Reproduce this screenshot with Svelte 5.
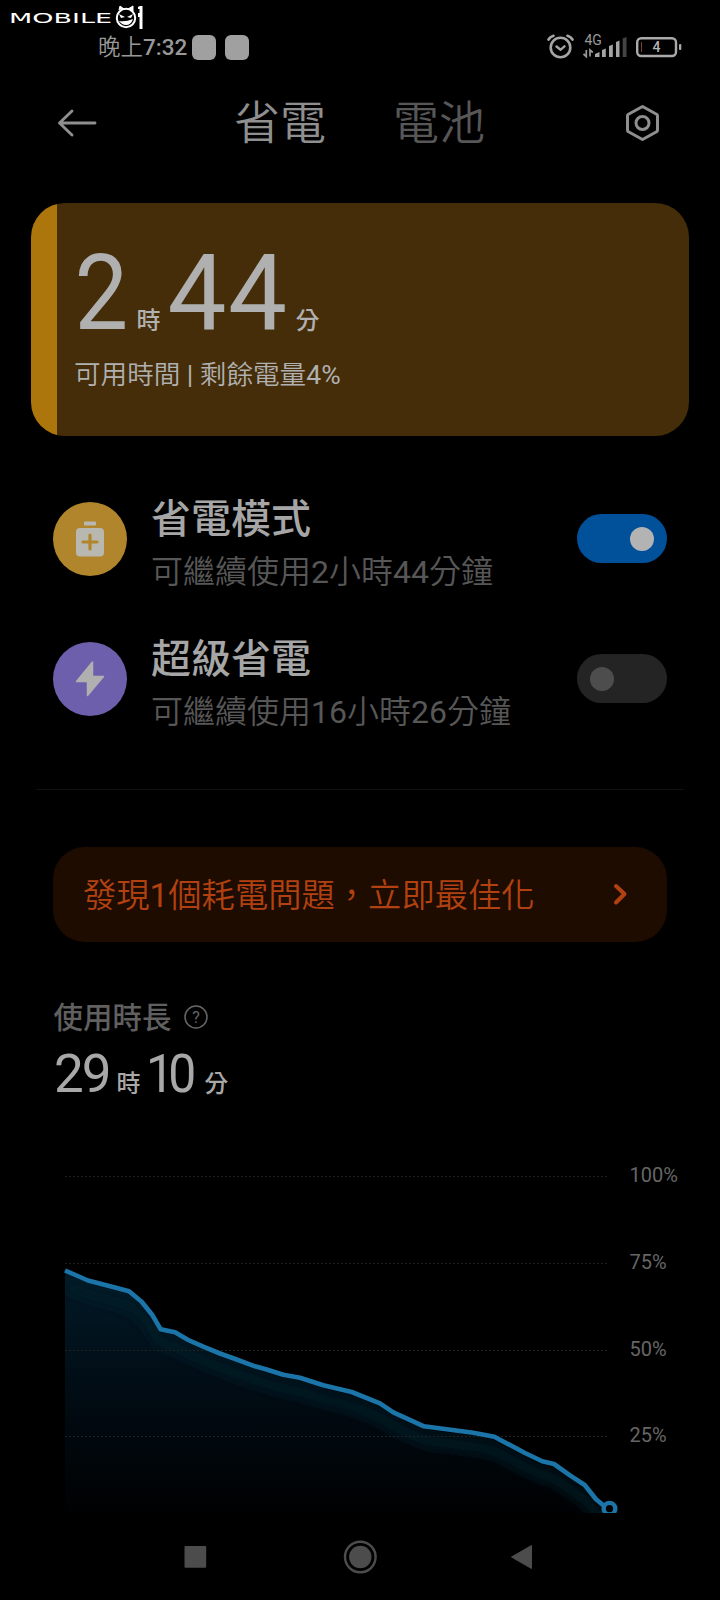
<script lang="ts">
  type Point = [number, number];

  const modes = [
    { id: "saver", title: "省電模式", detail: "可繼續使用2小時44分鐘", on: true },
    { id: "ultra", title: "超級省電", detail: "可繼續使用16小時26分鐘", on: false },
  ];

  const levels = [
    { label: "100%", y: 26.5 },
    { label: "75%", y: 113.5 },
    { label: "50%", y: 200.5 },
    { label: "25%", y: 286.5 },
  ];

  // battery level over time, in chart pixels
  const points: Point[] = [
    [65, 120.5], [88, 130.5], [115, 137.5], [129, 141.3], [141.7, 151.7],
    [152.3, 165], [160.7, 179.3], [175, 182.3], [188.3, 190], [203.3, 196.7],
    [220, 203.5], [236.7, 209.5], [255, 216.3], [266.7, 219.5], [283.3, 224.7],
    [300, 227.7], [323.3, 235.3], [351.7, 242], [380, 253.3], [393.3, 262.3],
    [424, 276.3], [473.3, 282.7], [494.3, 286.7], [525, 303], [542.3, 311.3],
    [554, 314], [570, 325.3], [584.7, 335], [596, 349.3], [603, 355],
    [609.5, 358.7],
  ];
  const chartHeight = 363;

  const line = points.map(([x, y]) => `${x},${y}`).join(" ");
  const area = `65,${chartHeight} ${line} 609.5,${chartHeight}`;
  const [endX, endY] = points[points.length - 1];

  // odd entries are the numbers, which take a heavier weight
  const splitNumbers = (text: string) => text.split(/(\d+)/);
</script>

<div class="screen">
  <svg class="watermark" width="150" height="34" viewBox="0 0 150 34">
    <text class="brand" x="9" y="23" textLength="103" lengthAdjust="spacingAndGlyphs">MOBILE</text>
    <circle cx="126" cy="18" r="9.2" fill="none" stroke="#fff" stroke-width="2" />
    <path d="M119 10L120 6L124 9M128 9L133 6L133 11" fill="#fff" stroke="#fff" />
    <path d="M119 14L125 17L121 18ZM133 14L127 17L131 18ZM119 21Q126 22 133 19Q131 25 126 25Q122 25 119 21Z" fill="#fff" />
    <path d="M138 7L140 6H142.500V29H139.500V17H138V13H139.500V9H138Z" fill="#fff" />
  </svg>

  <div class="status">
    <span class="clock">晚上<b>7:32</b></span>
    <i class="chip"></i>
    <i class="chip"></i>
    <svg class="signals" width="140" height="30" viewBox="0 0 140 30">
      <g fill="none" stroke="#a5a5a5" stroke-linecap="round">
        <circle cx="15.500" cy="15.500" r="9.800" stroke-width="2.600" />
        <path d="M11.500 14.500L15.500 17.800L19.500 14.300" stroke-width="2.400" />
        <path d="M3.500 7.500Q5 5 8.500 3.800M22.500 3.800Q26 5 27.500 7.500" stroke-width="2.700" />
      </g>
      <text class="net" x="39.500" y="13.300">4G</text>
      <path d="M41.300 18V24.500L38.500 22M45 24.500V18L47.800 20.500" fill="none" stroke="#999" stroke-width="1.700" />
      <g fill="#a5a5a5">
        <path d="M50 25V22L54.500 20V25Z" />
        <path d="M57 25V18L60.800 16.500V25Z" />
        <path d="M64 25V14L67.800 12.500V25Z" />
        <path d="M71 25V10L74.500 8.500V25Z" />
      </g>
      <path d="M77.700 25V6.500L81.500 5V25Z" fill="#444" />
      <rect x="92.200" y="6.200" width="38.800" height="17.800" rx="4" fill="none" stroke="#aaa" stroke-width="2.400" />
      <rect x="134" y="12" width="2.300" height="6" rx="1" fill="#aaa" />
      <rect x="96" y="10" width="1" height="10" fill="#74452c" />
      <text class="charge" x="107.500" y="20.300">4</text>
    </svg>
  </div>

  <header>
    <svg width="40" height="40" viewBox="0 0 40 40">
      <path d="M38 20H3M15 8L2.500 20L15 32" fill="none" stroke="#8f8f8f" stroke-width="2.900" stroke-linecap="round" stroke-linejoin="round" />
    </svg>
    <nav>
      <span class="tab active">省電</span>
      <span class="tab">電池</span>
    </nav>
    <svg width="40" height="40" viewBox="0 0 40 40">
      <g fill="none" stroke="#8f8f8f" stroke-width="3">
        <path d="M20.500 3.500L35 11.500Q35.500 12 35.500 13V27Q35.500 28 35 28.500L20.500 36.500L6 28.500Q5.500 28 5.500 27V13Q5.500 12 6 11.500Z" stroke-linejoin="round" />
        <circle cx="20.500" cy="20" r="6.500" />
      </g>
    </svg>
  </header>

  <section class="remaining">
    <div class="time">
      <b class="hours">2</b><span>時</span><b class="minutes">44</b><span>分</span>
    </div>
    <p>可用時間 <b>|</b> 剩餘電量<b>4%</b></p>
  </section>

  <section class="modes">
    {#each modes as mode (mode.id)}
      <div class="mode">
        <div class="icon {mode.id}">
          <svg width="74" height="74" viewBox="0 0 74 74">
            {#if mode.id === "saver"}
              <rect x="31" y="19.500" width="12" height="4" rx="1" fill="#b8b8b0" />
              <rect x="23" y="26" width="28" height="28.500" rx="4" fill="#b8b8b0" />
              <path d="M37 33V47M30 40H44" stroke="#b0852b" stroke-width="3.200" stroke-linecap="round" />
            {:else}
              <path d="M39.500 20L23.500 39.500H34.500V53.500L50.500 34.500H39.500Z" fill="#b0b0b0" stroke="#b0b0b0" stroke-width="1.500" stroke-linejoin="round" />
            {/if}
          </svg>
        </div>
        <div class="text">
          <h2>{mode.title}</h2>
          <p>{#each splitNumbers(mode.detail) as part, i}{#if i % 2}<b>{part}</b>{:else}{part}{/if}{/each}</p>
        </div>
        <div class="switch" class:on={mode.on}><i></i></div>
      </div>
    {/each}
  </section>

  <hr />

  <div class="alert">
    <span>發現<b>1</b>個耗電問題，立即最佳化</span>
    <svg width="20" height="28" viewBox="0 0 20 28">
      <path d="M5 5L13.500 13L5 21.500" fill="none" stroke="#b14110" stroke-width="4" stroke-linecap="round" stroke-linejoin="round" />
    </svg>
  </div>

  <section class="usage">
    <div class="label">
      <span>使用時長</span>
      <svg width="26" height="26" viewBox="0 0 26 26">
        <circle cx="13" cy="13" r="11" fill="none" stroke="#666" stroke-width="1.500" />
        <text class="help" x="13" y="18.500" text-anchor="middle">?</text>
      </svg>
    </div>
    <div class="total">
      <b>29</b><span>時</span><b class="minutes">10</b><span>分</span>
    </div>
  </section>

  <svg class="chart" width="720" height={chartHeight} viewBox="0 0 720 {chartHeight}">
    <defs>
      <linearGradient id="fill" gradientUnits="userSpaceOnUse" x1="0" y1="120" x2="0" y2={chartHeight}>
        <stop offset="0" stop-color="#021a28" />
        <stop offset="0.500" stop-color="#010c14" />
        <stop offset="1" stop-color="#000102" />
      </linearGradient>
      <clipPath id="under"><polygon points={area} /></clipPath>
      <filter id="soft" x="-10%" y="-10%" width="120%" height="130%">
        <feGaussianBlur stdDeviation="6" />
      </filter>
    </defs>
    <polygon points={area} fill="url(#fill)" />
    <g clip-path="url(#under)">
      <polyline class="glow" points={line} transform="translate(0 14)" filter="url(#soft)" />
    </g>
    {#each levels as level}
      <line class="grid" x1="65" x2="609" y1={level.y} y2={level.y} />
      <text class="level" x="629.500" y={level.y + 5.5}>{level.label}</text>
    {/each}
    <polyline class="curve" points={line} />
    <circle cx={endX} cy={endY} r="5.800" fill="#000" stroke="#1b75a8" stroke-width="4.400" />
  </svg>

  <footer>
    <svg width="720" height="40" viewBox="0 0 720 40" fill="#4c4c4c">
      <rect x="184.500" y="9" width="21.700" height="21.700" rx="1" />
      <circle cx="360.300" cy="20" r="11.200" />
      <circle cx="360.300" cy="20" r="15.300" fill="none" stroke="#4c4c4c" stroke-width="2.400" />
      <path d="M511.500 20L531.500 8.500V31.500Z" stroke="#4c4c4c" stroke-linejoin="round" />
    </svg>
  </footer>
</div>

<style>
  :global(body) {
    margin: 0;
    background: #000;
  }

  .screen {
    position: relative;
    display: flex;
    flex-direction: column;
    width: 720px;
    height: 1600px;
    overflow: hidden;
    background: #000;
    color: #a8a8a8;
    font-family: Roboto, "Noto Sans CJK TC", sans-serif;
  }

  svg {
    display: block;
    flex: none;
  }

  h2,
  p {
    margin: 0;
  }

  b {
    font-weight: 400;
  }

  .watermark {
    position: absolute;
    top: 0;
    left: 0;
  }
  .brand {
    fill: #fff;
    font: 400 14px "DejaVu Sans", sans-serif;
  }

  .status {
    display: flex;
    align-items: center;
    height: 94px;
    padding-left: 98px;
  }
  .clock {
    width: 94px;
    color: #999;
    font-size: 22.500px;
    font-weight: 350;
    line-height: 30px;
    white-space: nowrap;
  }
  .clock b {
    font-weight: 500;
  }
  .chip {
    width: 24px;
    height: 25px;
    margin-right: 9px;
    border-radius: 6px;
    background: #a0a0a0;
  }
  .signals {
    margin-left: 287px;
  }
  .net {
    fill: #999;
    font-size: 14px;
  }
  .charge {
    fill: #b5b5b5;
    font-size: 14px;
    font-weight: 500;
  }

  header {
    display: flex;
    align-items: center;
    justify-content: space-between;
    height: 58px;
    padding: 0 58px 0 57px;
  }
  nav {
    display: flex;
    gap: 67px;
  }
  .tab {
    color: #575757;
    font-size: 46px;
    font-weight: 350;
    line-height: 58px;
  }
  .tab.active {
    color: #8f8f8f;
  }

  .remaining {
    box-sizing: border-box;
    height: 233px;
    margin: 51px 31px 0;
    padding: 34px 0 0 43px;
    border-radius: 34px;
    background: linear-gradient(90deg, #ad760c 26px, #442d08 26px);
    color: #b0b0b0;
  }
  .time {
    display: flex;
    align-items: baseline;
    height: 118px;
    line-height: 114px;
  }
  .time b {
    font-size: 105px;
    font-weight: 430;
    letter-spacing: 1.500px;
  }
  .time .hours {
    margin-right: -6px;
    transform: scaleX(0.910);
    transform-origin: 6px 0;
  }
  .time span {
    margin-left: 8px;
    font-size: 24px;
    font-weight: 500;
  }
  .time .minutes {
    margin-left: 7px;
    margin-right: -1px;
  }
  .remaining p {
    font-size: 26.600px;
    font-weight: 350;
    line-height: 40px;
  }

  .modes {
    display: flex;
    flex-direction: column;
    gap: 40px;
    margin: 53px 53px 0;
  }
  .mode {
    display: flex;
    align-items: center;
    height: 100px;
  }
  .icon {
    border-radius: 50%;
    background: #b0852b;
  }
  .icon.ultra {
    background: #6d5fac;
  }
  .text {
    flex: 1;
    margin-left: 24px;
    padding-top: 12px;
  }
  .text h2 {
    color: #a6a6a6;
    font-size: 40px;
    font-weight: 500;
    line-height: 54px;
  }
  .text p {
    color: #575757;
    font-size: 32px;
    font-weight: 350;
    line-height: 50px;
  }
  .switch {
    box-sizing: border-box;
    display: flex;
    align-items: center;
    width: 90px;
    height: 49px;
    margin-bottom: 1px;
    padding: 0 13px;
    border-radius: 25px;
    background: #242424;
  }
  .switch i {
    width: 24px;
    height: 24px;
    border-radius: 50%;
    background: #4d4d4d;
  }
  .switch.on {
    justify-content: flex-end;
    background: #00509a;
  }
  .switch.on i {
    background: #b3b3b3;
  }

  hr {
    width: 648px;
    height: 1px;
    margin: 60px 36px 0;
    border: 0;
    background: #111;
  }

  .alert {
    display: flex;
    align-items: center;
    justify-content: space-between;
    height: 95px;
    margin: 57px 53px 0;
    padding: 0 36px 0 30px;
    border-radius: 32px;
    background: #1e0c01;
    color: #b14110;
    font-size: 33.300px;
    font-weight: 350;
  }
  .alert span {
    padding-bottom: 4px;
  }

  .usage {
    height: 208px;
    padding-left: 53px;
  }
  .label {
    display: flex;
    align-items: center;
    gap: 11px;
    height: 44px;
    padding: 53px 0 0 0.500px;
    color: #606060;
    font-size: 29.500px;
    font-weight: 500;
  }
  .label span {
    padding-bottom: 4px;
  }
  .help {
    fill: #666;
    font-size: 16px;
    font-weight: 400;
  }
  .total {
    display: flex;
    align-items: baseline;
    height: 66px;
    padding: 2px 0 0 1px;
    line-height: 66px;
  }
  .total b {
    font-size: 53px;
    font-weight: 430;
    letter-spacing: -2px;
  }
  .total .minutes {
    margin: 0 4px 0 -3px;
    letter-spacing: -6px;
    transform: scaleX(0.940);
    transform-origin: 0 0;
  }
  .total span {
    margin: 0 8px 0 7px;
    font-size: 24px;
    font-weight: 500;
  }

  .glow {
    fill: none;
    stroke: #021b28;
    stroke-width: 10;
  }
  .grid {
    stroke: #212323;
    stroke-dasharray: 2 2;
  }
  .level {
    fill: #666;
    font-size: 20px;
  }
  .curve {
    fill: none;
    stroke: #1b75a8;
    stroke-width: 4.600;
    stroke-linejoin: round;
  }

  footer {
    padding-top: 24px;
  }
</style>
